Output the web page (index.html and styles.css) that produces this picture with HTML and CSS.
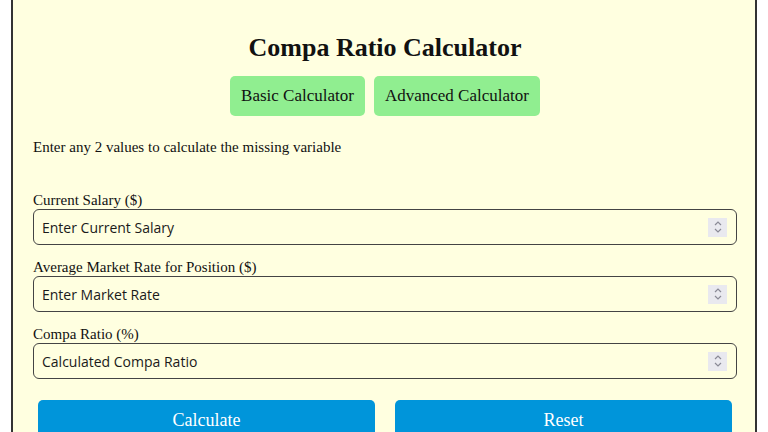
FILE: index.html
```html
<!DOCTYPE html>
<html lang="en">
<head>
    <meta charset="UTF-8">
    <title>Compa Ratio Calculator</title>
    <link rel="stylesheet" href="styles.css">
</head>
<body>
    <div class="calculator">
        <h1>Compa Ratio Calculator</h1>

        <!-- Mode switch -->
        <div class="mode-tabs">
            <button class="tab">Basic Calculator</button>
            <button class="tab">Advanced Calculator</button>
        </div>

        <p class="hint">Enter any 2 values to calculate the missing variable</p>

        <div class="field">
            <label for="salary">Current Salary ($)</label>
            <div class="number-box">
                <input type="text" id="salary" placeholder="Enter Current Salary">
                <span class="spinner">
                    <svg width="10" height="16" viewBox="0 0 10 16"><path d="M2 6 L5 3 L8 6 M2 10 L5 13 L8 10" fill="none" stroke="#8a8a96" stroke-width="1.2"/></svg>
                </span>
            </div>
        </div>

        <div class="field">
            <label for="market">Average Market Rate for Position ($)</label>
            <div class="number-box">
                <input type="text" id="market" placeholder="Enter Market Rate">
                <span class="spinner">
                    <svg width="10" height="16" viewBox="0 0 10 16"><path d="M2 6 L5 3 L8 6 M2 10 L5 13 L8 10" fill="none" stroke="#8a8a96" stroke-width="1.2"/></svg>
                </span>
            </div>
        </div>

        <div class="field">
            <label for="ratio">Compa Ratio (%)</label>
            <div class="number-box">
                <input type="text" id="ratio" placeholder="Calculated Compa Ratio">
                <span class="spinner">
                    <svg width="10" height="16" viewBox="0 0 10 16"><path d="M2 6 L5 3 L8 6 M2 10 L5 13 L8 10" fill="none" stroke="#8a8a96" stroke-width="1.2"/></svg>
                </span>
            </div>
        </div>

        <div class="actions">
            <button class="action">Calculate</button>
            <button class="action">Reset</button>
        </div>
    </div>
</body>
</html>
```

FILE: styles.css
```css
* {
    box-sizing: border-box;
}

body {
    margin: 0;
    padding: 0 11px;
    background-color: #fff;
    font-family: 'Liberation Serif', 'Times New Roman', serif;
    color: #111;
}

.calculator {
    background-color: #ffffe0;
    border: 2px solid #333;
    border-top: none;
    padding: 34px 18px 40px 20px;
}

h1 {
    font-size: 26px;
    font-weight: 700;
    text-align: center;
    margin: 0 0 14px;
    line-height: 28px;
}

.mode-tabs {
    display: flex;
    justify-content: center;
    gap: 9px;
}

.tab {
    font-family: inherit;
    font-size: 17px;
    color: #111;
    background-color: #90ee90;
    border: none;
    border-radius: 5px;
    padding: 0 11px;
    height: 40px;
}

.hint {
    font-size: 15px;
    margin: 22px 0 35px;
    line-height: 18px;
}

.field {
    margin-bottom: 13px;
}

.field label {
    display: block;
    font-size: 15px;
    line-height: 18px;
}

.number-box {
    display: flex;
    align-items: center;
    height: 36px;
    border: 1.5px solid #444;
    border-radius: 6px;
    padding: 0 9px 0 8px;
}

.number-box input {
    flex: 1;
    border: none;
    background: none;
    outline: none;
    font-family: 'Open Sans', Tahoma, sans-serif;
    font-size: 14px;
    color: #1a1a1a;
    padding: 0;
}

.number-box input::placeholder {
    color: #1a1a1a;
}

.spinner {
    display: flex;
    align-items: center;
    justify-content: center;
    width: 19px;
    height: 19px;
    background-color: #e9e9ef;
}

.actions {
    display: flex;
    gap: 20px;
    padding: 8px 5px 0;
}

.action {
    flex: 1;
    font-family: inherit;
    font-size: 18px;
    color: #fff;
    background-color: #0095da;
    border: none;
    border-radius: 5px;
    height: 40px;
}
```
